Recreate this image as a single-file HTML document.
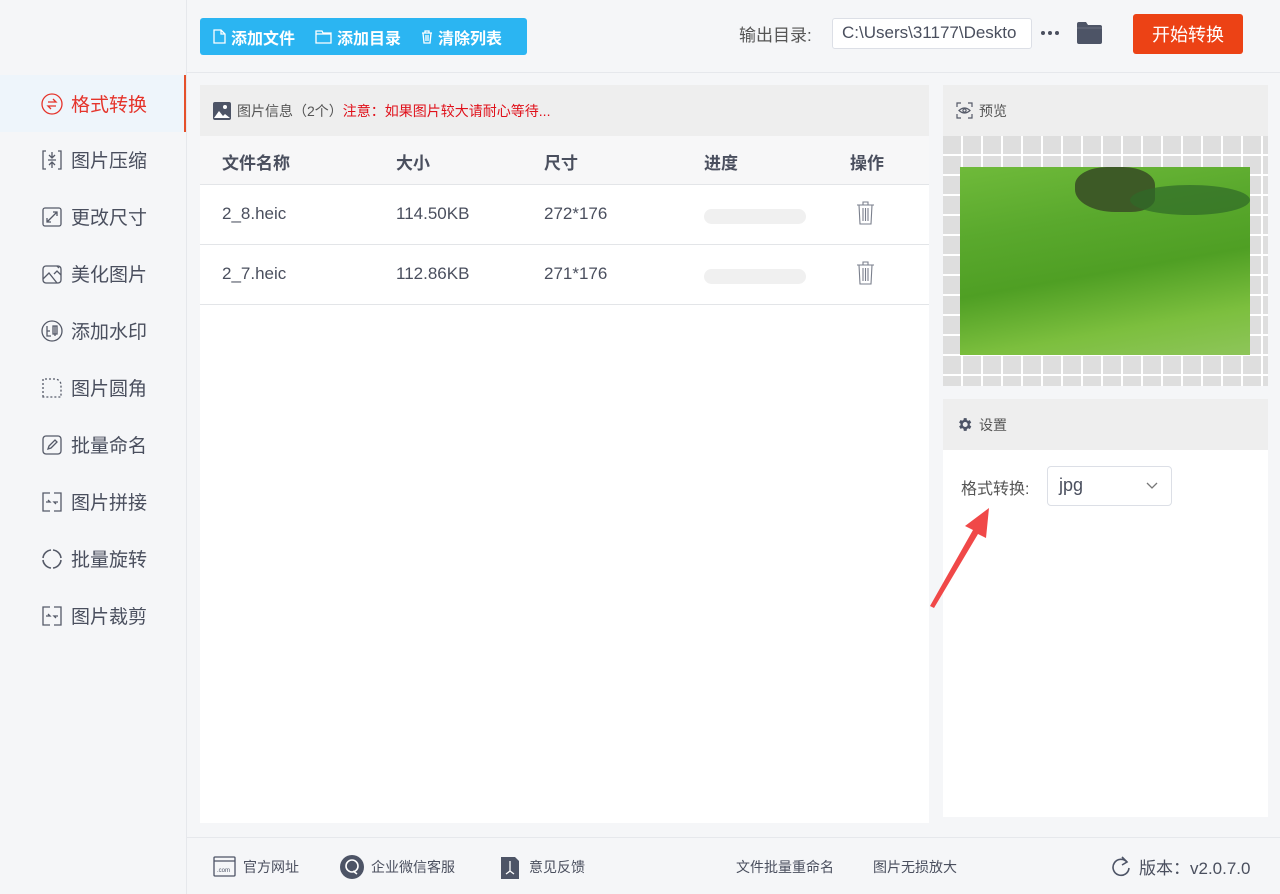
<!DOCTYPE html>
<html><head><meta charset="utf-8"><style>
*{margin:0;padding:0;box-sizing:border-box}
body{width:1280px;height:894px;background:#f5f6f8;font-family:"Liberation Sans","Noto Sans CJK SC",sans-serif;position:relative;overflow:hidden;color:#4a4f5e}
.abs{position:absolute}
.side{left:0;top:0;width:187px;height:894px;border-right:1px solid #e6e8ec;background:#f5f6f8}
.item{position:absolute;left:0;width:186px;height:57px;display:flex;align-items:center;padding-left:40px;font-size:19px;color:#4a4f5e}
.item svg{width:24px;height:24px;margin-right:7px}
.item.act{background:#eef5fb;color:#e5342b;border-right:2px solid #e5502b}
.tb{left:200px;top:18px;width:327px;height:37px;background:#2bb5f2;border-radius:3px;color:#fff;font-size:16px;font-weight:bold;display:flex;align-items:center;padding-left:13px;white-space:nowrap}
.tb span{margin-right:20px;display:flex;align-items:center;flex-shrink:0;white-space:nowrap}
.tb svg{margin-right:5px;flex-shrink:0}
</style></head><body>
<div class="abs side"></div>
<div class="item act" style="top:75px"><svg viewBox="0 0 24 24" fill="none" stroke="#e5342b" stroke-width="1.3"><circle cx="12" cy="12" r="10"/><path d="M8 10h8l-3-3M16 14H8l3 3"/></svg>格式转换</div>
<div class="item" style="top:131px"><svg viewBox="0 0 24 24" fill="none" stroke="#555a68" stroke-width="1.3"><path d="M6 3H3v18h3M18 3h3v18h-3M12 4v6M9 7l3 3 3-3M12 20v-6M9 17l3-3 3 3M8 12h8"/></svg>图片压缩</div>
<div class="item" style="top:188px"><svg viewBox="0 0 24 24" fill="none" stroke="#555a68" stroke-width="1.3"><rect x="3" y="3" width="18" height="18" rx="2"/><path d="M7 17l10-10M13 7h4v4M7 13v4h4"/></svg>更改尺寸</div>
<div class="item" style="top:245px"><svg viewBox="0 0 24 24" fill="none" stroke="#555a68" stroke-width="1.3"><rect x="3" y="4" width="18" height="17" rx="3"/><path d="M3 17l6-6 8 10M14 12l3-3 4 4M17 4l2 2"/></svg>美化图片</div>
<div class="item" style="top:302px"><svg viewBox="0 0 24 24" fill="none" stroke="#555a68" stroke-width="1.3"><circle cx="12" cy="12" r="10"/><path d="M7 7v10h4M7 12h3M13 7h4v8h-4zM15 7v10"/></svg>添加水印</div>
<div class="item" style="top:359px"><svg viewBox="0 0 24 24" fill="none" stroke="#555a68" stroke-width="1.3" stroke-dasharray="2 2"><path d="M3 21V3h12a6 6 0 0 1 6 6v12z"/></svg>图片圆角</div>
<div class="item" style="top:416px"><svg viewBox="0 0 24 24" fill="none" stroke="#555a68" stroke-width="1.3"><rect x="3" y="3" width="18" height="18" rx="3"/><path d="M8 16l1-3 6-6 2 2-6 6z"/></svg>批量命名</div>
<div class="item" style="top:473px"><svg viewBox="0 0 24 24" fill="none" stroke="#555a68" stroke-width="1.3"><path d="M10 3H3v18h7M14 3h7v18h-7M6 12h4l-2-2M18 12h-4l2 2"/></svg>图片拼接</div>
<div class="item" style="top:530px"><svg viewBox="0 0 24 24" fill="none" stroke="#555a68" stroke-width="1.6"><path d="M13 3a9 9 0 0 1 8 8M21 13a9 9 0 0 1-8 8M11 21a9 9 0 0 1-8-8M3 11a9 9 0 0 1 8-8"/></svg>批量旋转</div>
<div class="item" style="top:587px"><svg viewBox="0 0 24 24" fill="none" stroke="#555a68" stroke-width="1.3"><path d="M10 3H3v18h7M14 3h7v18h-7M6 12h4l-2-2M18 12h-4l2 2"/></svg>图片裁剪</div>

<div class="abs" style="left:187px;top:72px;width:1093px;height:1px;background:#e6e8ec"></div>
<div class="abs tb">
<span><svg width="13" height="15" viewBox="0 0 13 15" fill="none" stroke="#fff" stroke-width="1.3"><path d="M1 1h7l4 4v9H1zM8 1v4h4"/></svg>添加文件</span>
<span><svg width="17" height="14" viewBox="0 0 17 14" fill="none" stroke="#fff" stroke-width="1.3"><path d="M1 1h6l1 2h8v10H1zM1 4h15"/></svg>添加目录</span>
<span><svg width="12" height="14" viewBox="0 0 12 14" fill="none" stroke="#fff" stroke-width="1.3"><path d="M1 3h10M4 3V1h4v2M2 3l1 10h6l1-10M5 5v6M7 5v6"/></svg>清除列表</span>
</div>
<div class="abs" style="left:739px;top:21px;font-size:17px;color:#555">输出目录:</div>
<div class="abs" style="left:832px;top:18px;width:200px;height:31px;background:#fff;border:1px solid #dcdfe6;border-radius:3px;font-size:17px;color:#4a4f5e;padding:4px 9px;white-space:nowrap;overflow:hidden">C:\Users\31177\Deskto</div>
<div class="abs" style="left:1041px;top:31px;width:4px;height:4px;border-radius:2px;background:#4a4f5e;box-shadow:7px 0 #4a4f5e,14px 0 #4a4f5e"></div>
<svg class="abs" style="left:1077px;top:21px" width="25" height="23" viewBox="0 0 25 23"><path d="M0 3a2 2 0 0 1 2-2h7l2 3h12a2 2 0 0 1 2 2v15a2 2 0 0 1-2 2H2a2 2 0 0 1-2-2z" fill="#4d5466"/><path d="M0 7h25" stroke="#6a7080" stroke-width="1"/></svg>
<div class="abs" style="left:1133px;top:14px;width:110px;height:40px;background:#ec4215;border-radius:3px;color:#fff;font-size:18px;display:flex;align-items:center;justify-content:center">开始转换</div>

<div class="abs" style="left:200px;top:85px;width:729px;height:738px;background:#fff"></div>
<div class="abs" style="left:200px;top:85px;width:729px;height:51px;background:#eeeeee;font-size:14px;display:flex;align-items:center;padding-left:13px;color:#555">
<svg width="18" height="18" viewBox="0 0 18 18" style="margin-right:6px"><rect x="0" y="0" width="18" height="18" rx="2" fill="#4d5466"/><circle cx="12" cy="5" r="2" fill="#fff"/><path d="M1 16l5-7 4 5 2-2 5 4z" fill="#fff"/></svg>图片信息（2个）<span style="color:#e0101a">注意：如果图片较大请耐心等待...</span></div>
<div class="abs" style="left:200px;top:136px;width:729px;height:49px;background:#f7f7f8;border-bottom:1px solid #e3e5e8"></div>
<div class="abs" style="left:200px;top:244px;width:729px;height:1px;background:#e3e5e8"></div>
<div class="abs" style="left:200px;top:304px;width:729px;height:1px;background:#e3e5e8"></div>
<div class="abs" style="top:149px;left:222px;font-size:17px;font-weight:bold;color:#4a4f5e">文件名称</div>
<div class="abs" style="top:149px;left:396px;font-size:17px;font-weight:bold;color:#4a4f5e">大小</div>
<div class="abs" style="top:149px;left:544px;font-size:17px;font-weight:bold;color:#4a4f5e">尺寸</div>
<div class="abs" style="top:149px;left:704px;font-size:17px;font-weight:bold;color:#4a4f5e">进度</div>
<div class="abs" style="top:149px;left:850px;font-size:17px;font-weight:bold;color:#4a4f5e">操作</div>
<div class="abs" style="top:204px;left:222px;font-size:17px">2_8.heic</div>
<div class="abs" style="top:204px;left:396px;font-size:17px">114.50KB</div>
<div class="abs" style="top:204px;left:544px;font-size:17px">272*176</div>
<div class="abs" style="top:209px;left:704px;width:102px;height:15px;background:#f0f0f0;border-radius:8px"></div>
<div class="abs" style="top:264px;left:222px;font-size:17px">2_7.heic</div>
<div class="abs" style="top:264px;left:396px;font-size:17px">112.86KB</div>
<div class="abs" style="top:264px;left:544px;font-size:17px">271*176</div>
<div class="abs" style="top:269px;left:704px;width:102px;height:15px;background:#f0f0f0;border-radius:8px"></div>
<svg class="abs" style="left:856px;top:201px" width="19" height="24" viewBox="0 0 19 24" fill="none" stroke="#7a7f8c" stroke-width="1.1"><path d="M1 4h17M7 4V1h5v3M3 4l1 19h11l1-19M7 7v13M9.5 7v13M12 7v13"/></svg>
<svg class="abs" style="left:856px;top:261px" width="19" height="24" viewBox="0 0 19 24" fill="none" stroke="#7a7f8c" stroke-width="1.1"><path d="M1 4h17M7 4V1h5v3M3 4l1 19h11l1-19M7 7v13M9.5 7v13M12 7v13"/></svg>

<div class="abs" style="left:943px;top:85px;width:325px;height:51px;background:#eeeeee;font-size:14px;display:flex;align-items:center;padding-left:13px;color:#555">
<svg width="17" height="17" viewBox="0 0 17 17" fill="none" stroke="#555a68" stroke-width="1.2" style="margin-right:6px"><path d="M1 5V1h4M12 1h4v4M16 12v4h-4M5 16H1v-4"/><path d="M3 8.5q5.5-5 11 0q-5.5 5-11 0z"/><circle cx="8.5" cy="8.5" r="1.6"/></svg>预览</div>
<div class="abs" style="left:943px;top:136px;width:325px;height:250px;background-color:#dedede;background-image:repeating-linear-gradient(90deg,transparent 0 18px,#fff 18px 20px),repeating-linear-gradient(180deg,transparent 0 18px,#fff 18px 20px)"></div>
<div class="abs" style="left:960px;top:167px;width:290px;height:188px;background:linear-gradient(170deg,#6fba3a 0%,#5aa92d 30%,#4f9f24 55%,#7cbf3e 80%,#8ec55a 100%)"></div>
<div class="abs" style="left:1075px;top:167px;width:80px;height:45px;background:#3d5a26;border-radius:40% 40% 30% 50%"></div>
<div class="abs" style="left:1130px;top:185px;width:120px;height:30px;background:#2f6a28;border-radius:50%;opacity:.7"></div>
<div class="abs" style="left:943px;top:399px;width:325px;height:51px;background:#eeeeee;font-size:14px;display:flex;align-items:center;padding-left:13px;color:#555">
<svg width="17" height="17" viewBox="0 0 24 24" style="margin-right:6px"><path fill="#4d5466" d="M19.4 13a7.5 7.5 0 0 0 0-2l2.1-1.6-2-3.5-2.5 1a7 7 0 0 0-1.7-1L15 3h-4l-.4 2.7a7 7 0 0 0-1.7 1l-2.5-1-2 3.5L6.5 11a7.5 7.5 0 0 0 0 2l-2.1 1.6 2 3.5 2.5-1a7 7 0 0 0 1.7 1L11 21h4l.4-2.7a7 7 0 0 0 1.7-1l2.5 1 2-3.5zM13 15.5a3.5 3.5 0 1 1 0-7 3.5 3.5 0 0 1 0 7z"/></svg>设置</div>
<div class="abs" style="left:943px;top:450px;width:325px;height:367px;background:#fff"></div>
<div class="abs" style="left:961px;top:475px;font-size:16px;color:#555">格式转换:</div>
<div class="abs" style="left:1047px;top:466px;width:125px;height:40px;border:1px solid #dcdfe6;border-radius:4px;font-size:18px;padding:8px 0 0 11px">jpg</div>
<svg class="abs" style="left:1146px;top:482px" width="12" height="8" viewBox="0 0 12 8" fill="none" stroke="#777" stroke-width="1.3"><path d="M1 1l5 5 5-5"/></svg>
<svg class="abs" style="left:925px;top:500px" width="70" height="110" viewBox="0 0 70 110"><path d="M5 106L48 30l-8-4 24-18-3 30-8-4L9 108z" fill="#f04848"/></svg>

<div class="abs" style="left:187px;top:837px;width:1093px;height:1px;background:#e6e8ec"></div>
<div class="abs" style="left:213px;top:856px;font-size:14px;color:#4a4f5e;display:flex;align-items:center">
<svg width="23" height="21" viewBox="0 0 23 21" fill="none" stroke="#4d5466" stroke-width="1.3" style="margin-right:7px"><rect x="1" y="1" width="21" height="19" rx="1"/><path d="M1 5h21"/><text x="4" y="16" font-size="6" fill="#4d5466" stroke="none" font-family="Liberation Sans">.com</text></svg>官方网址</div>
<div class="abs" style="left:340px;top:855px;font-size:14px;display:flex;align-items:center"><svg width="24" height="24" viewBox="0 0 24 24" style="margin-right:7px"><circle cx="12" cy="12" r="12" fill="#4d5466"/><circle cx="12" cy="11" r="6" fill="none" stroke="#fff" stroke-width="1.6"/><path d="M13 16l4 3" stroke="#fff" stroke-width="1.6"/></svg>企业微信客服</div>
<div class="abs" style="left:501px;top:855px;font-size:14px;display:flex;align-items:center"><svg width="18" height="24" viewBox="0 0 18 24" style="margin-right:10px"><path d="M0 2h14l4 4v18H0z" fill="#4d5466"/><path d="M9 6v10l-4 3M9 16l4 3" stroke="#fff" stroke-width="1.3" fill="none"/></svg>意见反馈</div>
<div class="abs" style="left:736px;top:857px;font-size:14px">文件批量重命名</div>
<div class="abs" style="left:873px;top:857px;font-size:14px">图片无损放大</div>
<div class="abs" style="left:1112px;top:854px;font-size:17px;display:flex;align-items:center"><svg width="20" height="22" viewBox="0 0 20 22" fill="none" stroke="#4d5466" stroke-width="1.6" style="margin-right:7px"><path d="M15 6a8 8 0 1 0 2 6"/><path d="M10 1l5 5-5 3" /></svg>版本：v2.0.7.0</div>
</body></html>
